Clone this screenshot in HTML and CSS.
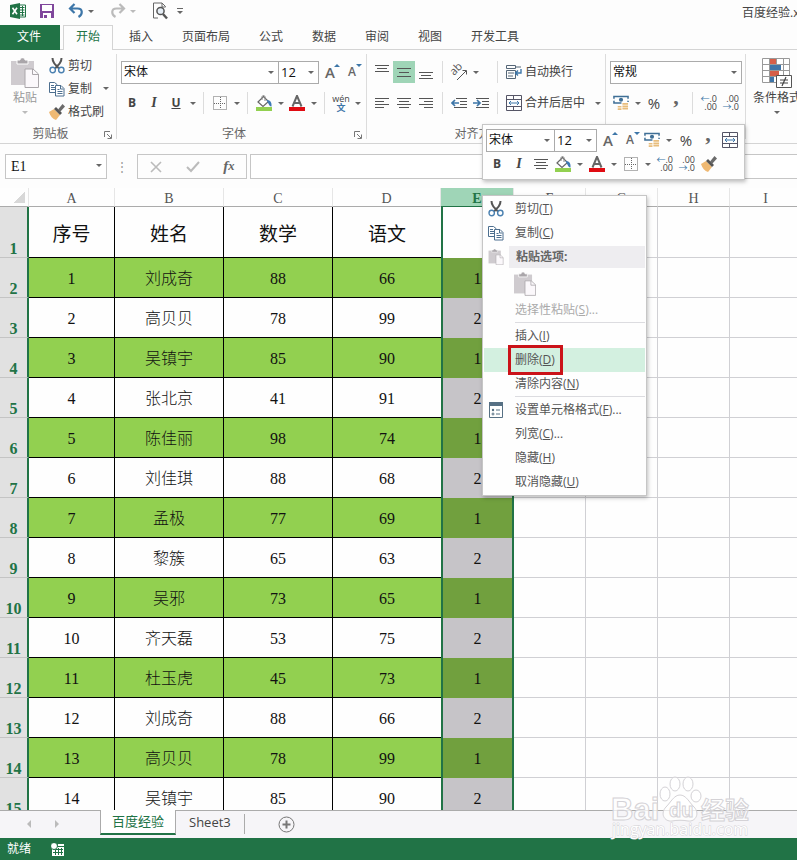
FILE: index.html
```
<!DOCTYPE html>
<html lang="zh-CN">
<head>
    <meta charset="UTF-8">
    <meta name="viewport" content="width=device-width, initial-scale=1.0">
    <title>百度经验.xlsx - Excel</title>
    <link rel="stylesheet" href="styles.css">
</head>
<body>

    <!-- Iconos compartidos -->
    <svg class="sprite" aria-hidden="true">
        <symbol id="i-excel" viewBox="0 0 16 16">
            <path d="M9 2h6.5v12H9z" fill="#fff" stroke="#217346"/>
            <path d="M10 4.5h4.500M10 7h4.500M10 9.500h4.500M10 12h4.500M12.500 3v10" stroke="#217346"/>
            <path d="M0 2l10-2v16L0 14z" fill="#217346"/>
            <path d="M2.500 4.800l4.500 6.500M7 4.800l-4.500 6.500" stroke="#fff" stroke-width="1.600"/>
        </symbol>
        <symbol id="i-save" viewBox="0 0 16 16">
            <path d="M1 1h14v14H1z" fill="#80479c"/>
            <path d="M4 2h9v6H3V2zM4 10h8v5H4z" fill="#fff"/>
            <path d="M5 12h3v3H5z" fill="#80479c"/>
        </symbol>
        <symbol id="i-undo" viewBox="0 0 16 16">
            <path d="M2 5.500h7.500c5.500 0 5.500 6 1 8.500M6.500 1L2 5.500 6.500 10" fill="none" stroke="currentColor" stroke-width="2.200"/>
        </symbol>
        <symbol id="i-preview" viewBox="0 0 16 18">
            <path d="M13.500 5V4.500L10 1H1.500v15H6M10 1v4h3.500" fill="none" stroke="#666"/>
            <circle cx="8.500" cy="9" r="3.600" fill="#e6eef6" stroke="#555" stroke-width="1.500"/>
            <path d="M11 12l4 4.500" stroke="#555" stroke-width="2.400"/>
        </symbol>
        <symbol id="i-paste" viewBox="0 0 28 30">
            <path d="M0 3h23v24H0z" fill="#cfcbcf"/>
            <path d="M6 6V2h3c0-3 5-3 5 0h3v4z" fill="#aaa6aa" stroke="#fff"/>
            <path d="M14 11h8l5.500 5v13.500H14z" fill="#fbf8fb" stroke="#aaa6aa"/>
            <path d="M21.500 11v5.500h6" fill="none" stroke="#aaa6aa"/>
        </symbol>
        <symbol id="i-cut" viewBox="0 0 16 16">
            <path d="M3.500 0c0 4 2 6 6.500 10.500M12.500 0c0 4-2 6-6.500 10.500" fill="none" stroke="#555" stroke-width="2"/>
            <circle cx="3.700" cy="12" r="2.700" fill="none" stroke="#4a80b0" stroke-width="1.400"/>
            <circle cx="12.300" cy="12" r="2.700" fill="none" stroke="#4a80b0" stroke-width="1.400"/>
        </symbol>
        <symbol id="i-copy" viewBox="0 0 16 16">
            <path d="M.5 1.500h5l2.500 2V11.500H.5z" fill="#fff" stroke="#4d6f8f"/>
            <path d="M2 4.500h3M2 6.500h4M2 8.500h4" stroke="#4d6f8f"/>
            <path d="M6.500 4.500h5.500l3 3v7.500H6.500z" fill="#fff" stroke="#4d6f8f"/>
            <path d="M11.500 5v3h3M8.500 8.500h2M8.500 10.500h5M8.500 12.500h5" fill="none" stroke="#4d6f8f"/>
        </symbol>
        <symbol id="i-brush" viewBox="0 0 16 16">
            <path d="M0 8l5-3 6 6-4 5c-3-1-6-4-7-8z" fill="#efb973"/>
            <path d="M5 5l2-2 6 6-2 2z" fill="#555"/>
            <path d="M9 5.500L13.500 0l2.500 2.500L11 8z" fill="#6b6b6b"/>
        </symbol>
        <symbol id="i-borders" viewBox="0 0 14 14">
            <path d="M.5 .5h13v13H.5zM7.500 1v12M1 7.500h12" fill="none" stroke="#666" stroke-dasharray="1 1"/>
        </symbol>
        <symbol id="i-fill" viewBox="0 0 16 16">
            <path d="M2 7l5.500-5.500 5 5L7 11.500z" fill="#fff" stroke="#666" stroke-width="1.200"/>
            <path d="M6 5V2c0-2 3-2 3 0v4" fill="none" stroke="#888"/>
            <path d="M10.500 5c3.500 0 5.500 2 5 6.500-2 0-2.500-2-5-6.500z" fill="#3d7ab5"/>
            <path d="M0 12h16v4H0z" fill="#92d050"/>
        </symbol>
        <symbol id="i-color" viewBox="0 0 16 16">
            <path d="M3.500 11.500L8 .8l4.500 10.700M5 8h6" fill="none" stroke="#666" stroke-width="2"/>
            <path d="M0 12h16v4H0z" fill="#e00b12"/>
        </symbol>
        <symbol id="i-top" viewBox="0 0 14 14"><path d="M0 .5h14M2 3.500h10M0 6.500h14" stroke="#555"/></symbol>
        <symbol id="i-middle" viewBox="0 0 14 14"><path d="M0 3.500h14M2 7.500h10M0 11.500h14" stroke="#555"/></symbol>
        <symbol id="i-bottom" viewBox="0 0 14 14"><path d="M0 7.500h14M2 10.500h10M0 13.500h14" stroke="#555"/></symbol>
        <symbol id="i-left" viewBox="0 0 14 12"><path d="M0 1.500h14M0 4.500h9M0 7.500h14M0 10.500h9" stroke="#555"/></symbol>
        <symbol id="i-center" viewBox="0 0 14 12"><path d="M0 1.500h14M2 4.500h10M0 7.500h14M2 10.500h10" stroke="#555"/></symbol>
        <symbol id="i-right" viewBox="0 0 14 12"><path d="M0 1.500h14M5 4.500h9M0 7.500h14M5 10.500h9" stroke="#555"/></symbol>
        <symbol id="i-outdent" viewBox="0 0 16 12">
            <path d="M5 1.500h11M9 4.500h7M9 7.500h7M3 10.500h13" stroke="#555"/>
            <path d="M8 6H1M4 3L1 6l3 3" fill="none" stroke="#3d76a8" stroke-width="1.700"/>
        </symbol>
        <symbol id="i-indent" viewBox="0 0 16 12">
            <path d="M3 1.500h13M9 4.500h7M9 7.500h7M3 10.500h13" stroke="#555"/>
            <path d="M0 6h7M4 3l3 3-3 3" fill="none" stroke="#3d76a8" stroke-width="1.700"/>
        </symbol>
        <symbol id="i-wrap" viewBox="0 0 16 16">
            <path d="M.5 1.500h9v3h-9zM.5 6.500h9v8h-9z" fill="none" stroke="#567"/>
            <path d="M2 9h6M2 12h5M10 3h5" stroke="#567"/>
            <path d="M15 5v4h-5M12 6.500L9.500 9l2.500 2.500" fill="none" stroke="#3d76a8" stroke-width="1.400"/>
        </symbol>
        <symbol id="i-merge" viewBox="0 0 16 16">
            <path d="M.5 .5h15v15H.5zM.5 4.500h15M.5 11.500h15M7.500 1v3.500M7.500 11.500V15" fill="none" stroke="#556"/>
            <path d="M3 8h10M5 6L3 8l2 2M11 6l2 2-2 2" fill="none" stroke="#3d76a8"/>
        </symbol>
        <symbol id="i-money" viewBox="0 0 17 16">
            <path d="M1 1h15v7H1z" fill="#fff" stroke="#3f6f96" stroke-width="1.600"/>
            <circle cx="8.500" cy="4.500" r="2.200" fill="#3f6f96"/>
            <path d="M0 3.500h2v2H0zM15 3.500h2v2h-2z" fill="#fff"/>
            <path d="M9 7h8v9H4v-5h5z" fill="#fff"/>
            <path d="M10 9h6M10 11.500h6M10 14h6M5 12h4M5 14.500h4" stroke="#e8bd7c" stroke-width="1.800"/>
        </symbol>
        <symbol id="i-cond" viewBox="0 0 30 30">
            <path d="M.5 .5h27v24H.5z" fill="#fff"/>
            <path d="M.5 .5h27v24H.5zM.5 6.500h27M.5 12.500h27M.5 18.500h27M7.500 .5v24M14.500 .5v24M21.500 .5v24" fill="none" stroke="#999"/>
            <path d="M8 1h6v5H8zM8 13h9v5H8z" fill="#d65f49"/>
            <path d="M8 7h11v5H8zM8 19h4v5H8z" fill="#3f75a8"/>
            <path d="M14.500 17.500h15v12h-15z" fill="#fff" stroke="#555"/>
            <path d="M18 22h8M18 25h8M24 19l-4 9" stroke="#444" stroke-width="1.200"/>
        </symbol>
        <symbol id="i-launch" viewBox="0 0 8 8">
            <path d="M.5 6V.5H6M3 3l4 4M7.500 3.500v4h-4" fill="none" stroke="#777"/>
        </symbol>
        <symbol id="i-format" viewBox="0 0 14 16">
            <path d="M.5 .5h13v15H.5z" fill="#fff" stroke="#567084"/>
            <path d="M0 0h14v4H0z" fill="#567084"/>
            <circle cx="4" cy="8" r="1.200" fill="#567084"/>
            <circle cx="4" cy="12" r="1" fill="none" stroke="#567084"/>
            <path d="M7 8h4M7 12h4" stroke="#567084"/>
        </symbol>
        <symbol id="i-macro" viewBox="0 0 13 13">
            <path d="M1 4h12v9H1zM7 1h6v2H7z" fill="#fff"/>
            <path d="M2 6.500h10M2 9.500h10M4.500 5v7M7.500 5v7M10.500 5v7" stroke="#217346"/>
            <circle cx="3" cy="3" r="3.500" fill="#fff" stroke="#217346"/>
        </symbol>
    </svg>

    <header class="titlebar">
        <div class="quick">
            <svg class="ic16"><use href="#i-excel"/></svg>
            <button class="q save" aria-label="保存"><svg class="ic16"><use href="#i-save"/></svg></button>
            <button class="q" aria-label="撤消"><svg class="ic16 blue"><use href="#i-undo"/></svg><i class="caret"></i></button>
            <button class="q" aria-label="恢复"><svg class="ic16 flip"><use href="#i-undo"/></svg><i class="caret pale"></i></button>
            <button class="q" aria-label="打印预览"><svg class="ic16 tall"><use href="#i-preview"/></svg></button>
            <button class="q more" aria-label="自定义"><i class="caret"></i></button>
        </div>
        <div class="doc-name">百度经验.xlsx - Excel</div>
    </header>

    <nav class="tabs">
        <a href="#" class="file">文件</a>
        <a href="#" class="active">开始</a>
        <a href="#">插入</a>
        <a href="#">页面布局</a>
        <a href="#">公式</a>
        <a href="#">数据</a>
        <a href="#">审阅</a>
        <a href="#">视图</a>
        <a href="#">开发工具</a>
    </nav>

    <section class="ribbon">
        <div class="group clipboard">
            <div class="body">
                <button class="big off"><svg class="paste-big"><use href="#i-paste"/></svg>粘贴<i class="caret pale"></i></button>
                <div class="list">
                    <button><svg class="ic16"><use href="#i-cut"/></svg>剪切</button>
                    <button><svg class="ic16"><use href="#i-copy"/></svg>复制<i class="caret"></i></button>
                    <button><svg class="ic16"><use href="#i-brush"/></svg>格式刷</button>
                </div>
            </div>
            <div class="caption">剪贴板<svg class="launch"><use href="#i-launch"/></svg></div>
        </div>

        <div class="group font">
            <div class="body rows">
                <div class="row">
                    <span class="select name"><select aria-label="字体"><option>宋体</option></select></span>
                    <span class="select size"><select aria-label="字号"><option>12</option></select></span>
                    <button class="btn grow" aria-label="增大字号">A</button>
                    <button class="btn shrink" aria-label="减小字号">A</button>
                </div>
                <div class="row">
                    <button class="btn b">B</button>
                    <button class="btn i">I</button>
                    <button class="btn u">U</button>
                    <button class="drop" aria-label="下划线"></button>
                    <span class="sep"></span>
                    <button class="btn" aria-label="边框"><svg class="ic14"><use href="#i-borders"/></svg></button>
                    <button class="drop" aria-label="边框选项"></button>
                    <span class="sep"></span>
                    <button class="btn" aria-label="填充颜色"><svg class="ic16"><use href="#i-fill"/></svg></button>
                    <button class="drop" aria-label="填充选项"></button>
                    <button class="btn" aria-label="字体颜色"><svg class="ic16"><use href="#i-color"/></svg></button>
                    <button class="drop" aria-label="颜色选项"></button>
                    <span class="sep"></span>
                    <button class="btn pinyin"><span>wén</span><b>文</b></button>
                    <button class="drop" aria-label="拼音选项"></button>
                </div>
            </div>
            <div class="caption">字体<svg class="launch"><use href="#i-launch"/></svg></div>
        </div>

        <div class="group align">
            <div class="body rows">
                <div class="row">
                    <button class="btn" aria-label="顶端对齐"><svg class="ic14"><use href="#i-top"/></svg></button>
                    <button class="btn on" aria-label="垂直居中"><svg class="ic14"><use href="#i-middle"/></svg></button>
                    <button class="btn" aria-label="底端对齐"><svg class="ic14"><use href="#i-bottom"/></svg></button>
                    <span class="sep"></span>
                    <button class="btn" aria-label="方向"><svg class="ic16 orient" viewBox="0 0 16 16"><text class="ab" transform="translate(3 12) rotate(-45)">ab</text><path d="M6 16l9-9M11.500 6.500h4v4" fill="none" stroke="#555"/></svg></button>
                    <button class="drop" aria-label="方向选项"></button>
                    <span class="sep wide"></span>
                    <button class="text"><svg class="ic16"><use href="#i-wrap"/></svg>自动换行</button>
                </div>
                <div class="row">
                    <button class="btn" aria-label="左对齐"><svg class="ic14"><use href="#i-left"/></svg></button>
                    <button class="btn" aria-label="居中"><svg class="ic14"><use href="#i-center"/></svg></button>
                    <button class="btn" aria-label="右对齐"><svg class="ic14"><use href="#i-right"/></svg></button>
                    <span class="sep"></span>
                    <button class="btn" aria-label="减少缩进量"><svg class="ic16"><use href="#i-outdent"/></svg></button>
                    <button class="btn" aria-label="增加缩进量"><svg class="ic16"><use href="#i-indent"/></svg></button>
                    <span class="sep"></span>
                    <button class="text"><svg class="ic16"><use href="#i-merge"/></svg>合并后居中<i class="caret"></i></button>
                </div>
            </div>
            <div class="caption">对齐方式</div>
        </div>

        <div class="group number">
            <div class="body rows">
                <div class="row">
                    <span class="select format"><select aria-label="数字格式"><option>常规</option></select></span>
                </div>
                <div class="row">
                    <button class="btn" aria-label="会计数字格式"><svg class="ic16"><use href="#i-money"/></svg></button>
                    <button class="drop" aria-label="货币选项"></button>
                    <button class="btn pct">%</button>
                    <button class="btn comma">,</button>
                    <span class="sep"></span>
                    <button class="btn dec"><span><em>←</em>.0</span><span>.00</span></button>
                    <button class="btn dec"><span>.00</span><span><em>→</em>.0</span></button>
                </div>
            </div>
        </div>

        <div class="group styles">
            <div class="body">
                <button class="big"><svg class="cond"><use href="#i-cond"/></svg>条件格式<i class="caret"></i></button>
            </div>
        </div>
    </section>

    <section class="formula-bar">
        <span class="select cell-ref"><select aria-label="名称框"><option>E1</option></select></span>
        <span class="dots">⋮</span>
        <div class="fx-box">
            <button aria-label="取消"><svg class="ic14" viewBox="0 0 14 14"><path d="M2 2l10 10M12 2L2 12" stroke="#bbb" stroke-width="1.600"/></svg></button>
            <button aria-label="输入"><svg class="ic14" viewBox="0 0 14 14"><path d="M1 7l4 4 8-9" fill="none" stroke="#bbb" stroke-width="2"/></svg></button>
            <button class="fx">f<small>x</small></button>
        </div>
        <input type="text" class="formula" aria-label="编辑栏">
    </section>

    <main class="sheet">
        <table>
            <colgroup>
                <col class="c-num"><col class="c-a"><col class="c-b"><col class="c-b"><col class="c-d">
                <col class="c-e"><col class="c-f"><col class="c-f"><col class="c-f"><col class="c-f">
            </colgroup>
            <thead>
                <tr><th class="corner"></th><th>A</th><th>B</th><th>C</th><th>D</th><th class="sel">E</th><th>F</th><th>G</th><th>H</th><th>I</th></tr>
            </thead>
            <tbody>
                <tr class="head"><th>1</th><td>序号</td><td>姓名</td><td>数学</td><td>语文</td><td></td><td></td><td></td><td></td><td></td></tr>
                <tr><th>2</th><td>1</td><td>刘成奇</td><td>88</td><td>66</td><td>1</td><td></td><td></td><td></td><td></td></tr>
                <tr><th>3</th><td>2</td><td>高贝贝</td><td>78</td><td>99</td><td>2</td><td></td><td></td><td></td><td></td></tr>
                <tr><th>4</th><td>3</td><td>吴镇宇</td><td>85</td><td>90</td><td>1</td><td></td><td></td><td></td><td></td></tr>
                <tr><th>5</th><td>4</td><td>张北京</td><td>41</td><td>91</td><td>2</td><td></td><td></td><td></td><td></td></tr>
                <tr><th>6</th><td>5</td><td>陈佳丽</td><td>98</td><td>74</td><td>1</td><td></td><td></td><td></td><td></td></tr>
                <tr><th>7</th><td>6</td><td>刘佳琪</td><td>88</td><td>68</td><td>2</td><td></td><td></td><td></td><td></td></tr>
                <tr><th>8</th><td>7</td><td>孟极</td><td>77</td><td>69</td><td>1</td><td></td><td></td><td></td><td></td></tr>
                <tr><th>9</th><td>8</td><td>黎簇</td><td>65</td><td>63</td><td>2</td><td></td><td></td><td></td><td></td></tr>
                <tr><th>10</th><td>9</td><td>吴邪</td><td>73</td><td>65</td><td>1</td><td></td><td></td><td></td><td></td></tr>
                <tr><th>11</th><td>10</td><td>齐天磊</td><td>53</td><td>75</td><td>2</td><td></td><td></td><td></td><td></td></tr>
                <tr><th>12</th><td>11</td><td>杜玉虎</td><td>45</td><td>73</td><td>1</td><td></td><td></td><td></td><td></td></tr>
                <tr><th>13</th><td>12</td><td>刘成奇</td><td>88</td><td>66</td><td>2</td><td></td><td></td><td></td><td></td></tr>
                <tr><th>14</th><td>13</td><td>高贝贝</td><td>78</td><td>99</td><td>1</td><td></td><td></td><td></td><td></td></tr>
                <tr><th>15</th><td>14</td><td>吴镇宇</td><td>85</td><td>90</td><td>2</td><td></td><td></td><td></td><td></td></tr>
            </tbody>
        </table>
    </main>

    <footer>
        <div class="sheet-tabs">
            <span class="nav"><i class="prev"></i><i class="next"></i></span>
            <a href="#" class="current">百度经验</a>
            <a href="#">Sheet3</a>
            <button class="add" aria-label="新工作表"><svg viewBox="0 0 17 17"><circle cx="8.500" cy="8.500" r="7.500" fill="none" stroke="#777"/><path d="M8.500 4.500v8M4.500 8.500h8" stroke="#777" stroke-width="2"/></svg></button>
        </div>
        <div class="status">就绪<svg><use href="#i-macro"/></svg></div>
    </footer>

    <!-- Barra flotante -->
    <div class="mini">
        <div class="row">
            <span class="select name"><select aria-label="字体"><option>宋体</option></select></span>
            <span class="select size"><select aria-label="字号"><option>12</option></select></span>
            <button class="btn grow" aria-label="增大字号">A</button>
            <button class="btn shrink" aria-label="减小字号">A</button>
            <button class="btn" aria-label="会计数字格式"><svg class="ic16"><use href="#i-money"/></svg></button>
            <button class="drop" aria-label="货币选项"></button>
            <button class="btn pct">%</button>
            <button class="btn comma">,</button>
            <button class="btn" aria-label="合并后居中"><svg class="ic16"><use href="#i-merge"/></svg></button>
        </div>
        <div class="row">
            <button class="btn b">B</button>
            <button class="btn i">I</button>
            <button class="btn" aria-label="居中"><svg class="ic14"><use href="#i-center"/></svg></button>
            <button class="btn" aria-label="填充颜色"><svg class="ic16"><use href="#i-fill"/></svg></button>
            <button class="drop" aria-label="填充选项"></button>
            <button class="btn" aria-label="字体颜色"><svg class="ic16"><use href="#i-color"/></svg></button>
            <button class="drop" aria-label="颜色选项"></button>
            <button class="btn" aria-label="边框"><svg class="ic14"><use href="#i-borders"/></svg></button>
            <button class="drop" aria-label="边框选项"></button>
            <button class="btn dec"><span><em>←</em>.0</span><span>.00</span></button>
            <button class="btn dec"><span>.00</span><span><em>→</em>.0</span></button>
            <button class="btn" aria-label="格式刷"><svg class="ic16"><use href="#i-brush"/></svg></button>
        </div>
    </div>

    <!-- Menú contextual -->
    <div class="menu">
        <button><svg class="ic16"><use href="#i-cut"/></svg><span>剪切(<u>T</u>)</span></button>
        <button><svg class="ic16"><use href="#i-copy"/></svg><span>复制(<u>C</u>)</span></button>
        <div class="title"><svg class="ic16"><use href="#i-paste"/></svg><strong>粘贴选项:</strong></div>
        <button class="paste-opt" aria-label="粘贴"><svg><use href="#i-paste"/></svg></button>
        <button disabled><span>选择性粘贴(<u>S</u>)...</span></button>
        <hr>
        <button><span>插入(<u>I</u>)</span></button>
        <button class="hover"><span>删除(<u>D</u>)</span></button>
        <button><span>清除内容(<u>N</u>)</span></button>
        <hr>
        <button><svg class="ic16"><use href="#i-format"/></svg><span>设置单元格格式(<u>F</u>)...</span></button>
        <button><span>列宽(<u>C</u>)...</span></button>
        <button><span>隐藏(<u>H</u>)</span></button>
        <button><span>取消隐藏(<u>U</u>)</span></button>
    </div>

    <svg class="watermark" viewBox="0 0 150 70">
        <g fill="#fff" fill-opacity=".75" stroke="#d4d2d6">
            <ellipse cx="54" cy="22" rx="5" ry="7"/>
            <ellipse cx="64" cy="12" rx="5" ry="7"/>
            <ellipse cx="77" cy="12" rx="5" ry="7"/>
            <ellipse cx="85" cy="24" rx="5" ry="6"/>
            <path d="M69 23c6 0 9 7 14 12 6 6 2 15-6 14-5-1-11-1-16 0-8 1-12-8-6-14 5-5 8-12 14-12z"/>
            <text class="wm-big" x="0" y="48">Bai</text>
            <text class="wm-du" x="58" y="45">du</text>
            <text class="wm-cn" x="90" y="47">经验</text>
        </g>
        <text class="wm-url" x="1" y="63">jingyan.baidu.com</text>
    </svg>

</body>
</html>
```
FILE: styles.css
```
*, *::before, *::after {
    box-sizing: border-box;
}
body {
    margin: 0;
    height: 100vh;
    display: flex;
    flex-direction: column;
    position: relative;
    overflow: hidden;
    background-color: #fdfdfd;
    color: #444;
    font: 12px/16px "Open Sans", "Noto Sans CJK SC", sans-serif;
}
button, select, input {
    font: inherit;
    color: inherit;
    background: none;
    border: none;
    padding: 0;
    margin: 0;
}
button {
    display: flex;
    align-items: center;
    justify-content: center;
    white-space: nowrap;
}
a {
    color: inherit;
    text-decoration: none;
}
svg {
    flex: none;
    display: block;
}
.sprite {
    position: absolute;
    width: 0;
    height: 0;
}
.ic16 {
    width: 16px;
    height: 16px;
}
.ic14 {
    width: 14px;
    height: 14px;
}
.caret, .drop::before, .select::after {
    content: "";
    flex: none;
    width: 0;
    height: 0;
    border: 3px solid transparent;
    border-top-color: #666;
    border-bottom: none;
}
.caret.pale {
    border-top-color: #bbb;
}

/* Barra de título */
.titlebar {
    flex: none;
    height: 25px;
    display: flex;
    justify-content: space-between;
    align-items: center;
    padding-left: 10px;
}
.quick {
    display: flex;
    align-items: center;
    gap: 16px;
    padding-bottom: 3px;
}
.q {
    gap: 4px;
}
.save {
    margin-left: -3px;
}
.save + .q {
    margin-left: -3px;
}
.blue {
    color: #3d76a8;
}
.flip {
    color: #bbb;
    transform: scaleX(-1);
}
.tall {
    height: 18px;
}
.more {
    border-top: 1px solid #666;
    padding-top: 2px;
    margin-left: -7px;
}
.doc-name {
    width: 55px;
    white-space: nowrap;
    overflow: hidden;
}

/* Pestañas */
.tabs {
    flex: none;
    height: 25px;
    display: flex;
    gap: 3px;
    border-bottom: 1px solid #d4d4d4;
}
.tabs a {
    height: 25px;
    padding: 0 13px;
    line-height: 24px;
    white-space: nowrap;
}
.tabs .file {
    width: 60px;
    background-color: #217346;
    color: #fff;
    padding: 0 17px;
}
.tabs .active {
    color: #217346;
    background-color: #fdfdfd;
    border: 1px solid #d4d4d4;
    border-bottom: none;
    padding: 0 12px;
    line-height: 22px;
}

/* Cinta */
.ribbon {
    flex: none;
    height: 94px;
    display: flex;
    border-bottom: 1px solid #d4d4d4;
    overflow: hidden;
}
.group {
    flex: none;
    display: flex;
    flex-direction: column;
    position: relative;
    padding: 4px 4px 0;
}
.group::after {
    content: "";
    position: absolute;
    right: 0;
    top: 4px;
    bottom: 4px;
    border-right: 1px solid #dcdcdc;
}
.clipboard {
    width: 117px;
}
.font {
    width: 250px;
}
.align {
    width: 239px;
}
.number {
    width: 140px;
}
.body {
    display: flex;
    height: 72px;
}
.rows {
    flex-direction: column;
    gap: 7px;
    padding-top: 6px;
}
.row {
    display: flex;
    align-items: center;
    height: 24px;
}
.caption {
    display: flex;
    justify-content: center;
    padding-right: 16px;
    color: #666;
    position: relative;
}
.launch {
    position: absolute;
    right: 1px;
    top: 5px;
    width: 8px;
    height: 8px;
}
.big {
    flex-direction: column;
    justify-content: flex-start;
    padding: 4px 2px 0;
    width: 56px;
}
.big .caret {
    margin-top: 5px;
}
.clipboard .big {
    width: 42px;
}
.styles .big {
    padding-right: 4px;
}
.off {
    color: #999;
}
.paste-big, .cond {
    width: 28px;
    height: 30px;
    margin-bottom: 2px;
}
.cond {
    width: 30px;
}
.list {
    padding-left: 3px;
}
.list button {
    height: 23px;
    gap: 3px;
}
.list .caret {
    margin-left: 8px;
}
.btn {
    width: 22px;
    height: 22px;
    flex: none;
}
.on {
    background-color: #9fd5b7;
}
.drop {
    width: 11px;
    height: 22px;
    flex: none;
}
.sep {
    width: 1px;
    height: 22px;
    margin: 0 5px;
    background-color: #dcdcdc;
}
.sep.wide {
    margin-left: 16px;
}
.select {
    flex: none;
    position: relative;
    height: 23px;
    border: 1px solid #ababab;
    background-color: #fff;
}
.select::after {
    position: absolute;
    right: 4px;
    top: 9px;
}
.select select {
    appearance: none;
    display: block;
    width: 100%;
    height: 21px;
    padding-left: 2px;
    color: #111;
    outline: none;
}
.font .name {
    width: 158px;
}
.size {
    width: 41px;
    margin-left: -1px;
}
.size select {
    font-size: 13px;
}
.format {
    width: 132px;
}
.grow, .shrink {
    font-weight: 600;
    color: #666;
    font-size: 15px;
    position: relative;
}
.shrink {
    font-size: 12px;
}
.grow::after, .shrink::after {
    content: "";
    position: absolute;
    right: 1px;
    top: 3px;
    border: 3px solid transparent;
    border-top: none;
    border-bottom-color: #3d76a8;
}
.shrink::after {
    border-top: 3px solid #3d76a8;
    border-bottom: none;
}
.b, .u {
    font-weight: bold;
}
.i {
    font: italic bold 14px "Liberation Serif", serif;
}
.u {
    text-decoration: underline;
}
.pinyin {
    flex-direction: column;
    line-height: 9px;
    font-size: 9px;
}
.pinyin b {
    color: #3d76a8;
}
.orient {
    overflow: visible;
}
.ab {
    font-size: 11px;
    fill: #555;
}
.text {
    padding-left: 3px;
    gap: 3px;
}
.text .caret {
    margin-left: 7px;
}
.pct {
    font-size: 15px;
}
.comma {
    font: bold 22px/10px "Liberation Serif", serif;
    padding-bottom: 12px;
    color: #666;
}
.dec {
    flex-direction: column;
    align-items: flex-end;
    padding-right: 3px;
    font-size: 9px;
    line-height: 8px;
}
.dec em {
    color: #3d76a8;
    font-style: normal;
}

/* Barra de fórmulas */
.formula-bar {
    flex: none;
    height: 44px;
    display: flex;
    padding: 10px 0 9px 5px;
}
.formula-bar .select {
    height: 25px;
    border-color: #c6c6c6;
}
.cell-ref {
    width: 102px;
}
.formula-bar select {
    font: 14px/21px "Liberation Serif", serif;
    height: 23px;
    padding-left: 5px;
}
.dots {
    width: 30px;
    text-align: center;
    line-height: 25px;
    color: #999;
}
.fx-box {
    display: flex;
    justify-content: space-around;
    width: 110px;
    border: 1px solid #c6c6c6;
}
.fx {
    font: italic bold 15px "Liberation Serif", serif;
    color: #666;
}
.formula {
    flex: 1;
    min-width: 0;
    margin-left: 3px;
    border: 1px solid #c6c6c6;
    border-right: none;
    background-color: #fff;
}

/* Hoja */
.sheet {
    flex: 1;
    min-height: 0;
    overflow: hidden;
}
table {
    width: 802px;
    table-layout: fixed;
    border-collapse: separate;
    border-spacing: 0;
    background-color: #fefefe;
}
.c-num {
    width: 29px;
}
.c-a {
    width: 86px;
}
.c-b {
    width: 109px;
}
.c-d {
    width: 108px;
}
.c-e {
    width: 73px;
}
.c-f {
    width: 72px;
}
th, td {
    padding: 0;
    height: 40px;
    text-align: center;
    font: 16px/20px "Liberation Serif", "Noto Sans CJK SC", serif;
}
td {
    padding-top: 2px;
    color: #111;
    font-weight: 300;
    border-right: 1px solid #d0d0d4;
    border-bottom: 1px solid #d0d0d4;
}
thead th {
    height: 19px;
    font-size: 14px;
    line-height: 14px;
    vertical-align: bottom;
    color: #555;
    border-bottom: 1px solid #ababab;
    border-right: 1px solid #e6e6e6;
}
thead .sel {
    background-color: #9fd5b7;
    color: #217346;
    font-weight: bold;
    border-bottom-color: #217346;
}
.corner {
    background: linear-gradient(135deg, transparent 50%, #d8d8d8 50%) no-repeat 14px 4px / 11px 11px;
}
tbody th {
    vertical-align: bottom;
    line-height: 16px;
    font-weight: bold;
    color: #217346;
    background-color: #e1e1e1;
    border-right: 2px solid #217346;
    border-bottom: 1px solid #c4c4c4;
}
td:nth-child(-n+5) {
    border-color: #000;
}
td:nth-child(5) {
    border-right: none;
}
td:nth-child(6) {
    border: 2px solid #217346;
    border-top: none;
    border-bottom: none;
    background-color: #c6c4c8;
}
tr:nth-child(even) td:nth-child(-n+5) {
    background-color: #92d050;
}
tr:nth-child(even) td:nth-child(6) {
    background-color: #71a03e;
}
.head th, .head td {
    height: 51px;
}
.head td {
    padding-top: 6px;
    font-size: 19px;
    font-weight: 400;
}
.head td:nth-child(6) {
    background-color: #fefefe;
}

/* Pie */
footer {
    flex: none;
}
.sheet-tabs {
    display: flex;
    height: 28px;
    background-color: #f6f5f8;
    border-top: 1px solid #ababab;
    font-size: 13px;
}
.nav {
    width: 100px;
    display: flex;
    justify-content: center;
    align-items: center;
    gap: 24px;
    padding: 0 14px 2px 0;
}
.nav i {
    border: 4px solid transparent;
    border-right-color: #bbb;
    border-left: none;
}
.nav .next {
    border-left: 4px solid #bbb;
    border-right: none;
}
.sheet-tabs a {
    padding: 0 13px;
    line-height: 23px;
    height: 24px;
}
.sheet-tabs .current {
    margin-top: -1px;
    height: 25px;
    padding: 0 11px;
    background-color: #fff;
    color: #217346;
    border-right: 1px solid #ababab;
    border-left: 1px solid #ababab;
    border-bottom: 2px solid #217346;
}
.add {
    border-left: 1px solid #ababab;
    padding-left: 33px;
    height: 20px;
    margin-top: 3px;
}
.add svg {
    width: 17px;
    height: 17px;
}
.status {
    display: flex;
    align-items: center;
    gap: 20px;
    height: 22px;
    padding-left: 7px;
    background-color: #217346;
    color: #fff;
}
.status svg {
    width: 13px;
    height: 13px;
}

/* Elementos flotantes */
.mini, .menu {
    position: absolute;
    left: 482px;
    background-color: #fefefe;
    border: 1px solid #c6c6c6;
    box-shadow: 1px 2px 4px rgba(0, 0, 0, 0.25);
}
.mini {
    top: 124px;
    padding: 3px;
}
.mini .name {
    width: 69px;
}
.mini .size {
    width: 43px;
}
.mini .drop {
    width: 12px;
}
.menu {
    top: 195px;
    width: 165px;
    padding: 1px;
    color: #555;
}
.menu button, .title {
    display: flex;
    align-items: center;
    justify-content: flex-start;
    width: 100%;
    height: 24px;
}
.menu .ic16 {
    margin-left: 4px;
    margin-right: -20px;
}
.menu span {
    padding-left: 31px;
}
.menu button:disabled {
    color: #aaa;
}
.title strong {
    flex: 1;
    margin-left: 25px;
    padding-left: 7px;
    line-height: 22px;
    color: #666;
    background-color: #eeedf0;
}
.menu .paste-opt {
    height: 29px;
    padding-left: 30px;
}
.paste-opt svg {
    width: 22px;
    height: 24px;
}
.menu hr {
    height: 1px;
    margin: 0 0 1px 31px;
    border: none;
    background-color: #dcdce0;
}
.menu .hover {
    background-color: #d3f0e0;
    position: relative;
}
.hover::after {
    content: "";
    position: absolute;
    left: 24px;
    top: -3px;
    width: 55px;
    height: 30px;
    border: 3px solid #cb1319;
}
.watermark {
    position: absolute;
    right: 36px;
    bottom: 18px;
    width: 150px;
    height: 70px;
    overflow: visible;
}
.wm-big {
    font: bold 31px "Liberation Sans", sans-serif;
}
.wm-du {
    font: bold 20px "Liberation Sans", sans-serif;
}
.wm-cn {
    font: bold 24px "Noto Sans CJK SC", sans-serif;
}
.wm-url {
    font: 16px "Open Sans", sans-serif;
    fill: #fff;
    stroke: #d4d2d6;
    stroke-width: 1px;
    paint-order: stroke;
}
```
